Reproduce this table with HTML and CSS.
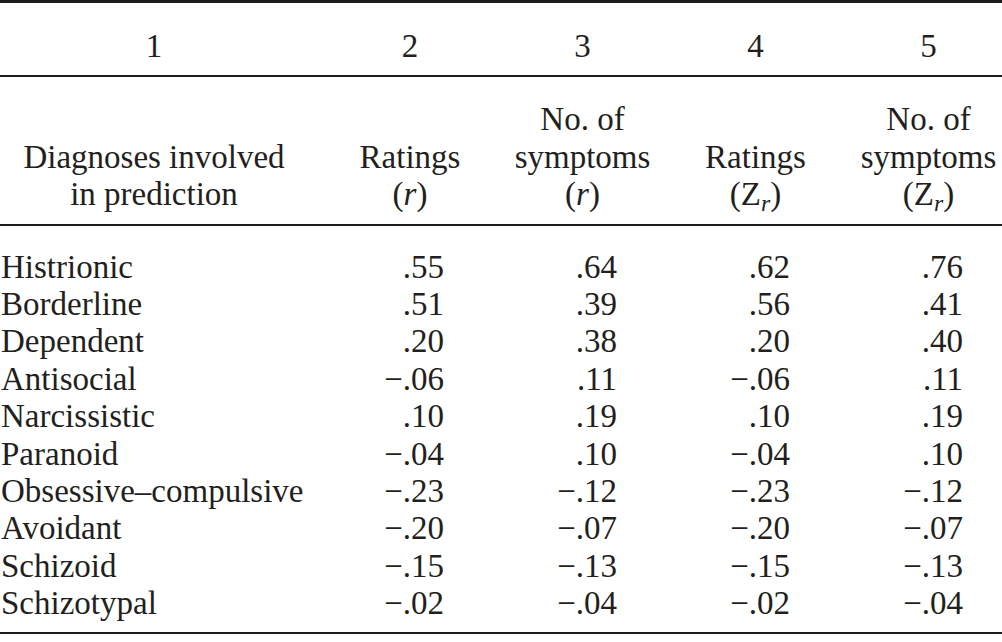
FILE: index.html
```html
<!DOCTYPE html>
<html lang="en">
<head>
<meta charset="utf-8">
<title>Correlations table</title>
<link rel="stylesheet" href="styles.css">
</head>
<body>
<div class="frame">
<table class="data">
  <colgroup>
    <col class="c1">
    <col class="c2">
    <col class="cn">
    <col class="cn">
    <col class="cn">
  </colgroup>
  <thead>
    <tr class="nums">
      <th>1</th><th class="pad2">2</th><th>3</th><th>4</th><th>5</th>
    </tr>
    <tr class="labels">
      <th>Diagnoses involved<br>in prediction</th>
      <th class="pad2">Ratings<br>(<i>r</i>)</th>
      <th>No. of<br>symptoms<br>(<i>r</i>)</th>
      <th>Ratings<br>(Z<sub><i>r</i></sub>)</th>
      <th>No. of<br>symptoms<br>(Z<sub><i>r</i></sub>)</th>
    </tr>
  </thead>
  <tbody>
    <tr class="first"><td>Histrionic</td><td>.55</td><td>.64</td><td>.62</td><td>.76</td></tr>
    <tr><td>Borderline</td><td>.51</td><td>.39</td><td>.56</td><td>.41</td></tr>
    <tr><td>Dependent</td><td>.20</td><td>.38</td><td>.20</td><td>.40</td></tr>
    <tr><td>Antisocial</td><td>−.06</td><td>.11</td><td>−.06</td><td>.11</td></tr>
    <tr><td>Narcissistic</td><td>.10</td><td>.19</td><td>.10</td><td>.19</td></tr>
    <tr><td>Paranoid</td><td>−.04</td><td>.10</td><td>−.04</td><td>.10</td></tr>
    <tr><td>Obsessive–compulsive</td><td>−.23</td><td>−.12</td><td>−.23</td><td>−.12</td></tr>
    <tr><td>Avoidant</td><td>−.20</td><td>−.07</td><td>−.20</td><td>−.07</td></tr>
    <tr><td>Schizoid</td><td>−.15</td><td>−.13</td><td>−.15</td><td>−.13</td></tr>
    <tr class="last"><td>Schizotypal</td><td>−.02</td><td>−.04</td><td>−.02</td><td>−.04</td></tr>
  </tbody>
</table>
</div>
</body>
</html>
```
FILE: styles.css
```css
html, body {
  margin: 0;
  padding: 0;
  background: #ffffff;
}
body {
  font-family: "Liberation Serif", "Times New Roman", serif;
  color: #231f20;
}
.frame {
  width: 1002px;
  overflow: hidden;
}
.data {
  width: 1015px;
  table-layout: fixed;
  border-collapse: collapse;
  font-size: 33px;
  line-height: 37.4px;
}
.c1 { width: 308px; }
.c2 { width: 188px; }
.cn { width: 173px; }

.data th, .data td {
  padding: 0;
  font-weight: normal;
  white-space: nowrap;
}
.data th {
  text-align: center;
}
.data th.pad2 {
  padding-left: 16px;
}
.nums th {
  border-top: 3px solid #1c1c1c;
  border-bottom: 2px solid #1c1c1c;
  padding-top: 25px;
  padding-bottom: 10px;
}
.labels th {
  vertical-align: bottom;
  border-bottom: 2px solid #1c1c1c;
  padding-top: 24px;
  padding-bottom: 10px;
}
.data sub {
  font-size: 0.72em;
  line-height: 0;
  vertical-align: -0.25em;
}
.data td {
  text-align: right;
  padding-right: 52px;
}
.data td:first-child {
  text-align: left;
  padding-left: 1px;
  padding-right: 0;
}
.first td {
  padding-top: 23px;
}
.last td {
  padding-bottom: 9px;
  border-bottom: 2px solid #1c1c1c;
}
```
